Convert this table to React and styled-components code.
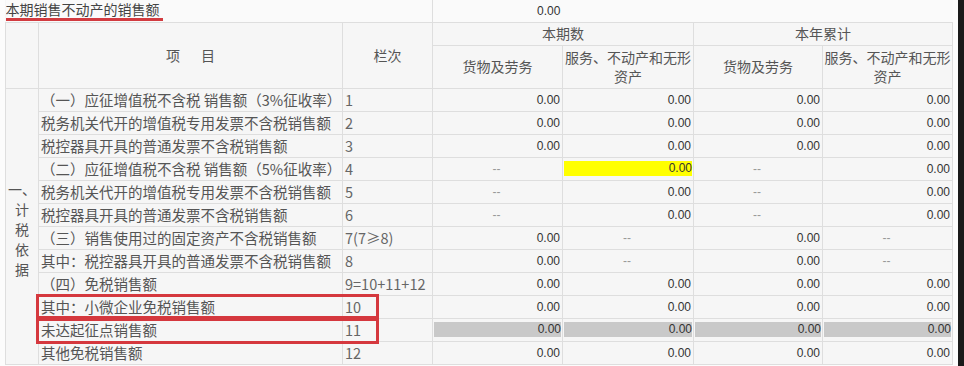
import React from 'react'
import styled, { createGlobalStyle } from 'styled-components'

const GlobalStyle = createGlobalStyle`
    body {
        margin: 0;
        background: #fcfcfc;
        font-family: "Noto Sans CJK SC", "Liberation Sans", sans-serif;
    }
`

const Page = styled.div`
    position: relative;
    width: 964px;
    height: 366px;
    overflow: hidden;
    padding-left: 5px;
    box-sizing: border-box;
    border-right: 6px solid #1a1a1a;
`

const Sheet = styled.table`
    border-collapse: collapse;
    table-layout: fixed;
    width: 947px;
    background: #f6f6f6;
    color: #555;

    td, th {
        border: 1px solid #dedede;
        padding: 0;
        overflow: hidden;
        white-space: nowrap;
        font-weight: normal;
    }
`

const TopRow = styled.tr`
    height: 22px;
`

const TitleCell = styled.td`
    && {
        border-left: none;
        border-top: none;
    }
    height: 21px;
    vertical-align: top;
    background: #fafafa;
`

const Title = styled.div`
    width: fit-content;
    font-size: 14px;
    line-height: 17px;
    color: #444;
    padding-right: 3px;
    margin-top: 1px;
    border-bottom: 3px solid #d23b40;
`

const TopValue = styled.td`
    && {
        border-top: none;
        border-right: none;
    }
    background: #fafafa;
    padding-left: 104px !important;
    font-family: "Liberation Sans", sans-serif;
    font-size: 12px;
    line-height: 16px;
    color: #333;
`

const Head = styled.th`
    font-size: 14px;
    line-height: 19px;
    text-align: center;
    color: #555;
    height: ${p => p.$h || 22}px;
    white-space: normal !important;
`

const Row = styled.tr`
    height: 23px;
`

const Side = styled.td`
    text-align: center;
    vertical-align: middle;
    font-size: 14px;
    line-height: 20px;
    color: #555;
    white-space: normal !important;
    padding-top: 6px !important;
`

const Item = styled.td`
    font-size: 14.5px;
    line-height: 20px;
    color: #555;
    padding-left: 2px !important;
`

const Code = styled.td`
    font-size: 14.5px;
    line-height: 20px;
    color: #666;
    padding-left: 2px !important;
`

const Num = styled.td`
    font-family: "Liberation Sans", sans-serif;
    font-size: 12px;
    line-height: 16px;
    color: #333;
    text-align: ${p => (p.$dash ? 'center' : 'right')};
    padding-right: 2px !important;
    ${p => p.$dash && 'color: #999;'}
`

const Fill = styled.div`
    margin: 0 -1px 0 1px;
    height: 15px;
    line-height: 15px;
    background: ${p => p.$tone};
`

const Mark = styled.div`
    position: absolute;
    left: 36px;
    width: 337px;
    border: 3px solid #d5383e;
    top: ${p => p.$top}px;
    height: ${p => p.$h}px;
`

const rows = [
    ['（一）应征增值税不含税 销售额（3%征收率）', '1', ['0.00', '0.00', '0.00', '0.00']],
    ['税务机关代开的增值税专用发票不含税销售额', '2', ['0.00', '0.00', '0.00', '0.00']],
    ['税控器具开具的普通发票不含税销售额', '3', ['0.00', '0.00', '0.00', '0.00']],
    ['（二）应征增值税不含税 销售额（5%征收率）', '4', ['--', 'Y', '--', '0.00']],
    ['税务机关代开的增值税专用发票不含税销售额', '5', ['--', '0.00', '--', '0.00']],
    ['税控器具开具的普通发票不含税销售额', '6', ['--', '0.00', '--', '0.00']],
    ['（三）销售使用过的固定资产不含税销售额', '7(7≥8)', ['0.00', '--', '0.00', '--']],
    ['其中：税控器具开具的普通发票不含税销售额', '8', ['0.00', '--', '0.00', '--']],
    ['（四）免税销售额', '9=10+11+12', ['0.00', '0.00', '0.00', '0.00']],
    ['其中：小微企业免税销售额', '10', ['0.00', '0.00', '0.00', '0.00']],
    ['未达起征点销售额', '11', ['G', 'G', 'G', 'G']],
    ['其他免税销售额', '12', ['0.00', '0.00', '0.00', '0.00']],
]

function Cell({ v }) {
    if (v === '--') return <Num $dash>--</Num>
    if (v === 'Y') return <Num><Fill $tone="#ffff00">0.00</Fill></Num>
    if (v === 'G') return <Num><Fill $tone="#c9c9c9">0.00</Fill></Num>
    return <Num>{v}</Num>
}

export default function App() {
    return (
        <>
            <GlobalStyle />
            <Page>
                <Sheet>
                    <colgroup>
                        <col style={{ width: 33 }} />
                        <col style={{ width: 304 }} />
                        <col style={{ width: 90 }} />
                        <col style={{ width: 130 }} />
                        <col style={{ width: 131 }} />
                        <col style={{ width: 129 }} />
                        <col style={{ width: 130 }} />
                    </colgroup>
                    <tbody>
                        <TopRow>
                            <TitleCell colSpan={3}><Title>本期销售不动产的销售额</Title></TitleCell>
                            <TopValue colSpan={4}>0.00</TopValue>
                        </TopRow>
                        <tr>
                            <Head rowSpan={2} />
                            <Head rowSpan={2}>项&emsp;&ensp;目</Head>
                            <Head rowSpan={2}>栏次</Head>
                            <Head colSpan={2}>本期数</Head>
                            <Head colSpan={2}>本年累计</Head>
                        </tr>
                        <tr>
                            <Head $h={42}>货物及劳务</Head>
                            <Head $h={42}>服务、不动产和无形<br />资产</Head>
                            <Head $h={42}>货物及劳务</Head>
                            <Head $h={42}>服务、不动产和无形<br />资产</Head>
                        </tr>
                        {rows.map(([label, code, vals], i) => (
                            <Row key={code}>
                                {i === 0 && (
                                    <Side rowSpan={12}>一、<br />计<br />税<br />依<br />据</Side>
                                )}
                                <Item>{label}</Item>
                                <Code>{code}</Code>
                                {vals.map((v, j) => <Cell key={j} v={v} />)}
                            </Row>
                        ))}
                    </tbody>
                </Sheet>
                <Mark $top={294} $h={19} />
                <Mark $top={318} $h={20} />
            </Page>
        </>
    )
}
